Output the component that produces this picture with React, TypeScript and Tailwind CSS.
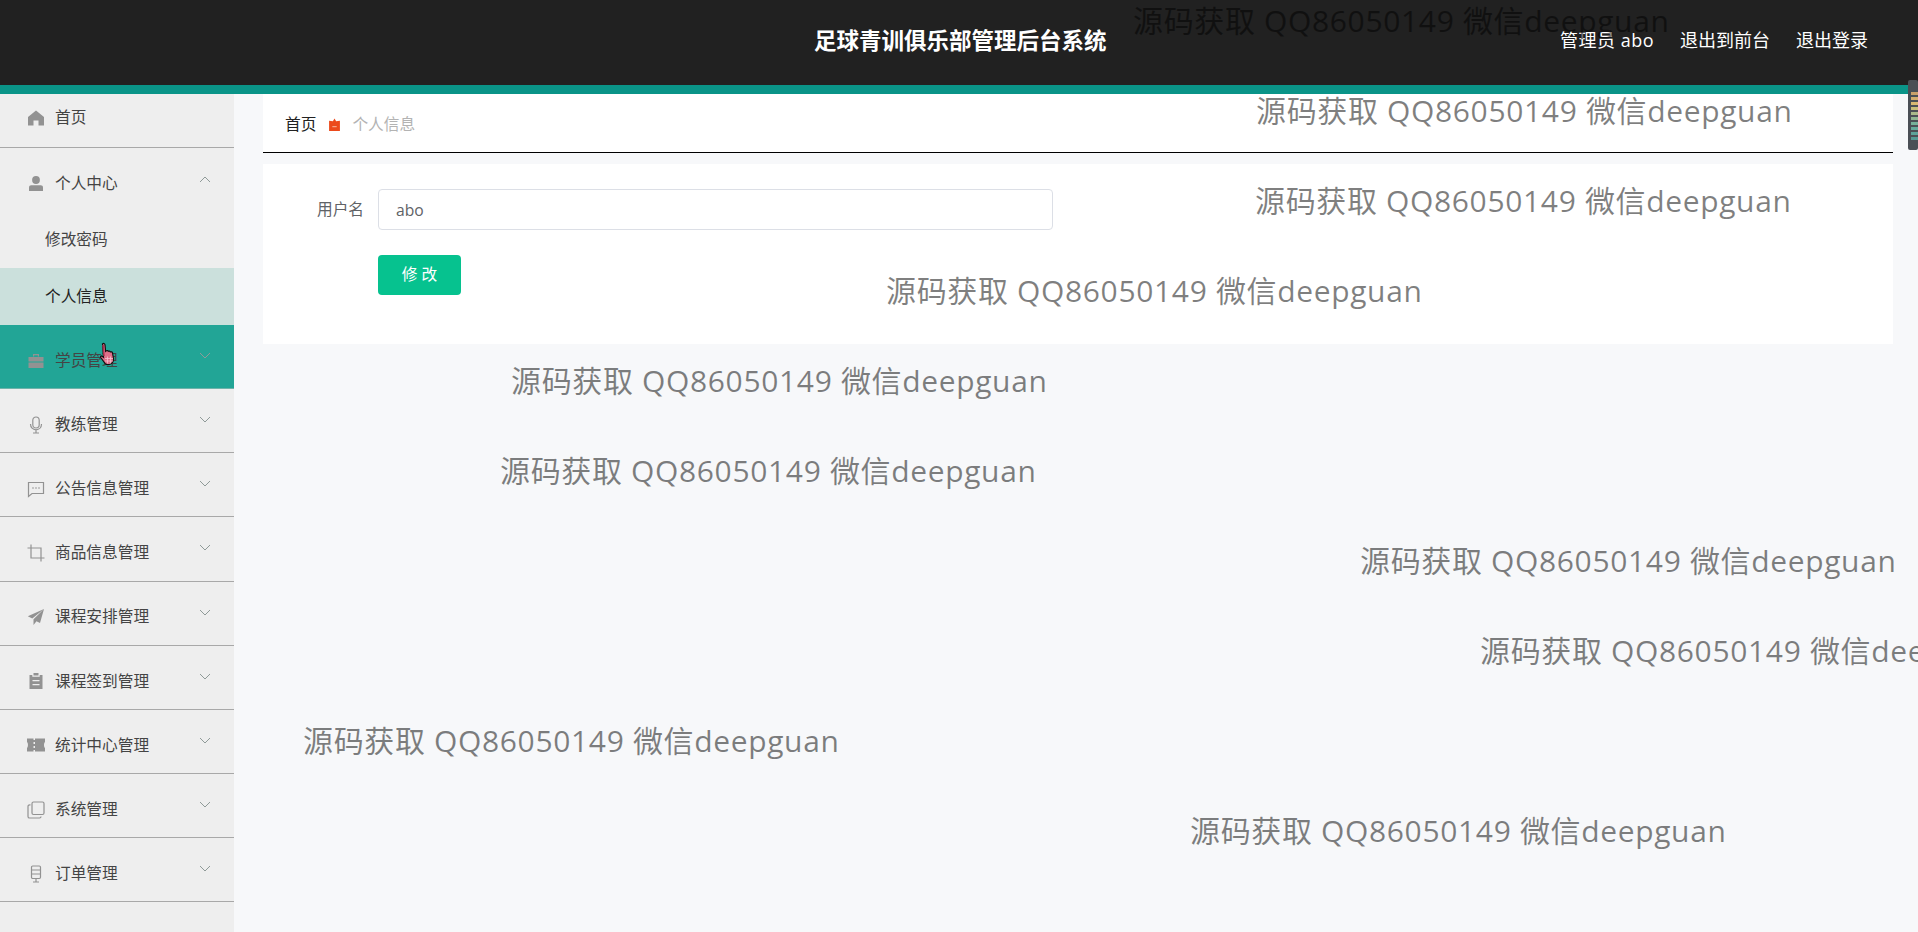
import type { ReactNode } from 'react';

const FONT = '[font-family:"Open_Sans","Noto_Sans_CJK_SC",sans-serif]';

const Icon = ({ children }: { children: ReactNode }) => (
  <svg viewBox="0 0 18 18" className="w-[18px] h-[18px] shrink-0 text-[#929292]" fill="currentColor" stroke="none">
    {children}
  </svg>
);

const line = { fill: 'none', stroke: 'currentColor', strokeWidth: 1.2 };

const icons: Record<string, ReactNode> = {
  home: <path d="M9 1.500 1 8v8.500h5.500v-5h5v5H17V8z" />,
  user: (
    <>
      <circle cx="9" cy="5" r="3.900" />
      <path d="M2 12.200c0-1.200 1-2 2.200-2h9.600c1.200 0 2.200.8 2.200 2V16H2z" />
    </>
  ),
  case: (
    <>
      <path d="M6 2h6v2.500h-1.200V3.200H7.200v1.300H6z" />
      <path d="M1.500 5h15v4.500h-15z" />
      <path d="M1.500 10.500h15V16h-15z" />
    </>
  ),
  mic: (
    <>
      <rect x="5.800" y="1" width="6.400" height="11" rx="3.200" {...line} />
      <path d="M3.500 8c0 3.400 2.400 5.800 5.500 5.800s5.500-2.400 5.500-5.800M9 13.800V17M6 17h6" {...line} />
    </>
  ),
  chat: (
    <>
      <path d="M1.500 2.500h15v11H5L1.500 16.500z" {...line} />
      <circle cx="6" cy="8" r=".8" />
      <circle cx="9" cy="8" r=".8" />
      <circle cx="12" cy="8" r=".8" />
    </>
  ),
  crop: <path d="M4 .5V14h13.500M.5 4H14v13.500" {...line} />,
  send: <path d="M17 1 .8 8.200l4.500 2.300zM17 1 6.500 11.300V17l3-3.800 3.500 1.800z" />,
  clip: (
    <>
      <path d="M6.500 1h5v2.500h-5z" />
      <path d="M2.500 3h2.800v1.800h7.400V3h2.800v14h-13zM5.500 8v1.300h7V8zM5.500 12v1.300h7V12z" fillRule="evenodd" />
    </>
  ),
  ticket: <path d="M0 2.500h6.500v1.500H8V2.500h10V6c-1.300.7-1.300 5.300 0 6v3.500H8V14H6.500v1.500H0V12c1.300-.7 1.300-5.300 0-6zM6.500 6v2H8V6zM6.500 10v2H8v-2z" fillRule="evenodd" />,
  copy: (
    <>
      <rect x="5" y="1" width="12" height="12.500" rx="1.500" {...line} />
      <path d="M3.500 3.800H2.800C1.700 3.800 1 4.500 1 5.600v9.800c0 1 .7 1.600 1.600 1.600h9.900c1 0 1.500-.6 1.500-1.500" {...line} />
    </>
  ),
  coin: (
    <>
      <rect x="4.500" y="1" width="9" height="12.500" rx="1.200" {...line} />
      <path d="M4.500 5h9M4.500 9h9M9 13.500V17M6 17h6" {...line} />
    </>
  ),
};

const Chevron = ({ up }: { up?: boolean }) => (
  <svg viewBox="0 0 12 7" className="ml-auto mr-[23px] mb-[10px] w-[12px] h-[7px] text-[#8f9a98]" fill="none" stroke="currentColor" strokeWidth="1">
    <path d={up ? 'M1 6 6 1l5 5' : 'M1 1l5 5 5-5'} />
  </svg>
);

const HandCursor = () => (
  <svg viewBox="0 0 16 24" className="absolute left-[100px] top-[342px] w-[16px] h-[25px]">
    <path
      d="M2.500 1.500c1-1 2.300-.5 2.500.8l.6 6.500.7-.6c1-.5 1.800 0 2 .6.800-.4 1.700-.2 2 .6 1-.4 1.900 0 2.200 1l1 5.600c.2 2-1 4.800-3.500 5.800-2 .6-4 .2-5-1L.7 15c-.5-.8.100-1.700 1-1.500l1.800 1.300z"
      fill="#e0708a"
      stroke="#111"
      strokeWidth="1.200"
    />
    <path d="M3 2.500l1 11" stroke="#a8324f" strokeWidth="1.500" />
    <path d="M5 16h8M5 18.500h8M7.500 14v7M10.500 14v7" stroke="#f4c2cf" strokeWidth=".8" />
  </svg>
);

const menus = [
  { title: '学员管理', icon: 'case', hover: true },
  { title: '教练管理', icon: 'mic' },
  { title: '公告信息管理', icon: 'chat' },
  { title: '商品信息管理', icon: 'crop' },
  { title: '课程安排管理', icon: 'send' },
  { title: '课程签到管理', icon: 'clip' },
  { title: '统计中心管理', icon: 'ticket' },
  { title: '系统管理', icon: 'copy' },
  { title: '订单管理', icon: 'coin' },
];

const marks = [
  'left-[1133px] top-[-4px]',
  'left-[1256px] top-[86px]',
  'left-[1255px] top-[176px]',
  'left-[886px] top-[266px]',
  'left-[511px] top-[356px]',
  'left-[500px] top-[446px]',
  'left-[1360px] top-[536px]',
  'left-[1480px] top-[626px]',
  'left-[303px] top-[716px]',
  'left-[1190px] top-[806px]',
];

export default function App() {
  return (
    <div className={`relative h-screen overflow-hidden bg-[#f7f8fa] flex flex-col ${FONT}`}>
      <header className="h-[94px] shrink-0 bg-[#212121] border-b-[9px] border-[#0a9488] flex items-center text-white">
        <h1 className="ml-[814px] mb-[4px] text-[22.500px] font-bold whitespace-nowrap">足球青训俱乐部管理后台系统</h1>
        <div className="ml-auto mr-[50px] mb-[4px] flex gap-[26px] text-[18px]">
          <span className="tracking-[0.500px]">管理员 abo</span>
          <span>退出到前台</span>
          <span>退出登录</span>
        </div>
      </header>

      <div className="flex flex-1 min-h-0">
        <aside className="w-[234px] shrink-0 bg-[#eeeeee] text-[15.700px] text-[#444]">
          <div className="h-[54px] pb-[6px] pl-[27px] border-b border-[#a8a8a8] flex items-center gap-[10px]">
            <Icon>{icons.home}</Icon>
            <span>首页</span>
          </div>
          <div className="h-[64px] pt-[8px] pl-[27px] flex items-center gap-[10px]">
            <Icon>{icons.user}</Icon>
            <span>个人中心</span>
            <Chevron up />
          </div>
          <div className="h-[56px] pl-[45px] flex items-center">修改密码</div>
          <div className="h-[57px] pl-[45px] flex items-center bg-[#cbe0dc] text-[#222]">个人信息</div>
          {menus.map((m) => (
            <div
              key={m.title}
              className={`h-[64.150px] pt-[8px] pl-[27px] border-b flex items-center gap-[10px] ${
                m.hover ? 'bg-[#22a596] border-[#6fb3aa]' : 'border-[#a8a8a8]'
              }`}
            >
              <Icon>{icons[m.icon]}</Icon>
              <span>{m.title}</span>
              <Chevron />
            </div>
          ))}
        </aside>

        <main className="flex-1 min-w-0 pl-[29px] pr-[25px]">
          <div className="h-[59px] bg-white border-b border-black pl-[22px] pt-[3px] flex items-center text-[15.700px]">
            <span className="text-[#222]">首页</span>
            <svg viewBox="0 0 12 12" className="ml-[12px] w-[13px] h-[13px] text-[#ec4a1c]" fill="currentColor">
              <path d="M6 .5 7.500 3 11 2.500V12H1V2.500L4.500 3z" />
              <path d="M4 7.500h4v1H4z" fill="#f7b39a" />
            </svg>
            <span className="ml-[11px] text-[#b3b3b3]">个人信息</span>
          </div>

          <form className="mt-[11px] h-[180px] bg-white pt-[25px] pl-[54px]">
            <div className="flex items-center">
              <label className="w-[47px] text-[15.700px] text-[#606266] whitespace-nowrap">用户名</label>
              <input
                readOnly
                value="abo"
                className="ml-[14px] w-[675px] h-[41px] px-[17px] bg-white border border-[#dcdfe6] rounded-[4px] text-[15.700px] text-[#606266] outline-none"
              />
            </div>
            <button
              type="button"
              className="block ml-[61px] mt-[25px] w-[83px] h-[40px] bg-[#06c28f] rounded-[4px] text-white text-[15.700px]"
            >
              修 改
            </button>
          </form>
        </main>
      </div>

      {/* watermark text laid over the page */}
      <div className="absolute inset-0 pointer-events-none">
        {marks.map((cls) => (
          <span key={cls} className={`absolute text-[30px] tracking-[0.650px] leading-[50px] whitespace-nowrap text-black/50 ${cls}`}>
            源码获取 QQ86050149 微信deepguan
          </span>
        ))}
      </div>

      <HandCursor />

      {/* side widget peeking in at the right edge */}
      <svg viewBox="0 0 10 70" className="absolute right-0 top-[80px] w-[10px] h-[70px]">
        <rect x="0" y="0" width="10" height="70" rx="2" fill="#4a4f55" />
        {['#c9a06a', '#d3ac6e', '#d8b872', '#c8bd7a', '#a9b98a', '#8fb592', '#76b09a', '#66aa9c', '#5ca39a', '#549a94'].map((c, i) => (
          <rect key={c} x="3" y={12 + i * 5} width="7" height="3" fill={c} />
        ))}
      </svg>
    </div>
  );
}
